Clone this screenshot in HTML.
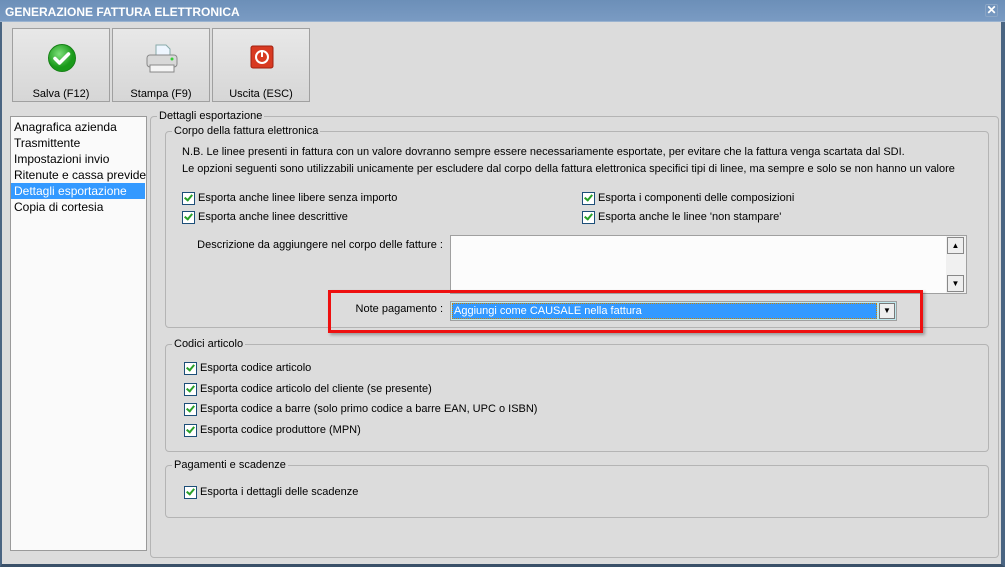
<!DOCTYPE html>
<html><head><meta charset="utf-8"><style>
*{box-sizing:border-box;margin:0;padding:0}
body{width:1005px;height:567px;position:relative;overflow:hidden;background:#dcdcdc;font-family:"Liberation Sans",sans-serif;font-size:11px;color:#000;white-space:nowrap}
.a{position:absolute}
.title{left:0;top:0;width:1005px;height:22px;background:linear-gradient(#6c8fb8,#7a9bc3);border-bottom:1px solid #9ab3d0;color:#fff;font-weight:bold;font-size:12px;padding:5px 0 0 5px}
.win{left:0;top:22px;width:1005px;height:545px;border-left:2px solid #4a6582;border-right:4px solid #4a6582;border-bottom:3px solid #3a5068}
.btn{top:28px;width:98px;height:74px;border:1px solid #a0a0a0;background:linear-gradient(#e8e8e8,#d6d6d6);text-align:center}
.btn span{position:absolute;left:0;right:0;top:59px;font-size:11px}
.grp{border:1px solid #b4b4b4;border-radius:4px}
.lg{position:absolute;top:-7px;left:6px;background:#dcdcdc;padding:0 2px;font-size:11px}
.cb{position:absolute;font-size:11px;white-space:nowrap;padding-left:16px;line-height:13px}
.cb:before{content:"";position:absolute;left:0;top:0;width:11px;height:11px;border:1px solid #1c4e78;background:#fff}
.cb:after{content:"";position:absolute;left:4px;top:1px;width:3px;height:6px;border:solid #2aa02a;border-width:0 2px 2px 0;transform:rotate(40deg)}
.list div{font-size:12px;height:16px;line-height:16px;padding-left:3px;white-space:nowrap}
</style></head><body>
<div class="a title">GENERAZIONE FATTURA ELETTRONICA</div>
<div class="a" style="left:985px;top:4px;width:13px;height:13px;border:1px solid #8aa5c5;border-radius:2px;color:#fff;font-weight:bold;font-size:12px;line-height:11px;text-align:center">✕</div>
<div class="a win"></div>

<div class="a btn" style="left:12px"><svg class="a" style="left:34px;top:14px" width="30" height="30"><defs><radialGradient id="g" cx="40%" cy="35%"><stop offset="0" stop-color="#7ee07a"/><stop offset="1" stop-color="#1a9a1a"/></radialGradient></defs><circle cx="15" cy="15" r="13.5" fill="url(#g)" stroke="#178017"/><path d="M8 15.5l4.5 4.5 9-9" stroke="#fff" stroke-width="3.5" fill="none" stroke-linecap="round" stroke-linejoin="round"/></svg><span>Salva (F12)</span></div>
<div class="a btn" style="left:112px"><svg class="a" style="left:32px;top:14px" width="34" height="32"><path d="M11 2h10l4 4v8H11z" fill="#eef6ff" stroke="#8aa"/><rect x="2" y="12" width="30" height="12" rx="3" fill="#d8d8d8" stroke="#888"/><rect x="5" y="22" width="24" height="7" fill="#f4f4f4" stroke="#888"/><circle cx="27" cy="16" r="1.5" fill="#3c3"/></svg><span>Stampa (F9)</span></div>
<div class="a btn" style="left:212px"><svg class="a" style="left:37px;top:16px" width="24" height="24"><rect x="1" y="1" width="22" height="22" rx="2" fill="#d83a22" stroke="#a02010"/><circle cx="12" cy="12" r="6" fill="none" stroke="#fff" stroke-width="2"/><path d="M12 7v5" stroke="#fff" stroke-width="2"/></svg><span>Uscita (ESC)</span></div>

<div class="a list" style="left:10px;top:116px;width:137px;height:435px;background:#fafafa;border:1px solid #9a9a9a;padding-top:2px;overflow:hidden">
<div>Anagrafica azienda</div><div>Trasmittente</div><div>Impostazioni invio</div><div>Ritenute e cassa previdenziale</div><div style="background:#3399ff;color:#fff;width:134px">Dettagli esportazione</div><div>Copia di cortesia</div></div>

<div class="a grp" style="left:150px;top:116px;width:849px;height:442px"><div class="lg">Dettagli esportazione</div></div>
<div class="a grp" style="left:165px;top:131px;width:824px;height:197px"><div class="lg">Corpo della fattura elettronica</div></div>
<div class="a" style="left:182px;top:146px">N.B. Le linee presenti in fattura con un valore dovranno sempre essere necessariamente esportate, per evitare che la fattura venga scartata dal SDI.</div>
<div class="a" style="left:182px;top:163px">Le opzioni seguenti sono utilizzabili unicamente per escludere dal corpo della fattura elettronica specifici tipi di linee, ma sempre e solo se non hanno un valore</div>
<div class="cb" style="left:182px;top:192px">Esporta anche linee libere senza importo</div>
<div class="cb" style="left:182px;top:211px">Esporta anche linee descrittive</div>
<div class="cb" style="left:582px;top:192px">Esporta i componenti delle composizioni</div>
<div class="cb" style="left:582px;top:211px">Esporta anche le linee 'non stampare'</div>
<div class="a" style="left:160px;top:239px;width:283px;text-align:right">Descrizione da aggiungere nel corpo delle fatture :</div>
<div class="a" style="left:450px;top:235px;width:517px;height:59px;background:#fcfcfc;border:1px solid #a0a0a0"></div>
<div class="a" style="left:946px;top:236px;width:20px;height:57px;background:#f0f0f0"></div>
<div class="a" style="left:947px;top:237px;width:17px;height:17px;border:1px solid #888;background:#eee;font-size:8px;text-align:center;line-height:15px">▲</div>
<div class="a" style="left:947px;top:275px;width:17px;height:17px;border:1px solid #888;background:#eee;font-size:8px;text-align:center;line-height:15px">▼</div>
<div class="a" style="left:330px;top:303px;width:113px;text-align:right">Note pagamento :</div>
<div class="a" style="left:450px;top:301px;width:447px;height:20px;border:1px solid #a0a0a0;background:#bfe9ee"></div>
<div class="a" style="left:452px;top:303px;width:425px;height:16px;background:#3399ff;border:1px dotted #d08000;color:#fff;padding-left:1px;line-height:14px">Aggiungi come CAUSALE nella fattura</div>
<div class="a" style="left:879px;top:303px;width:16px;height:16px;border:1px solid #777;background:#eee;font-size:8px;text-align:center;line-height:14px">▼</div>
<div class="a" style="left:328px;top:290px;width:595px;height:43px;border:3px solid #ee1010;box-shadow:2px 2px 3px rgba(0,0,0,.3)"></div>

<div class="a grp" style="left:165px;top:344px;width:824px;height:108px"><div class="lg">Codici articolo</div></div>
<div class="cb" style="left:184px;top:362px">Esporta codice articolo</div>
<div class="cb" style="left:184px;top:383px">Esporta codice articolo del cliente (se presente)</div>
<div class="cb" style="left:184px;top:403px">Esporta codice a barre (solo primo codice a barre EAN, UPC o ISBN)</div>
<div class="cb" style="left:184px;top:424px">Esporta codice produttore (MPN)</div>

<div class="a grp" style="left:165px;top:465px;width:824px;height:53px"><div class="lg">Pagamenti e scadenze</div></div>
<div class="cb" style="left:184px;top:486px">Esporta i dettagli delle scadenze</div>
</body></html>
